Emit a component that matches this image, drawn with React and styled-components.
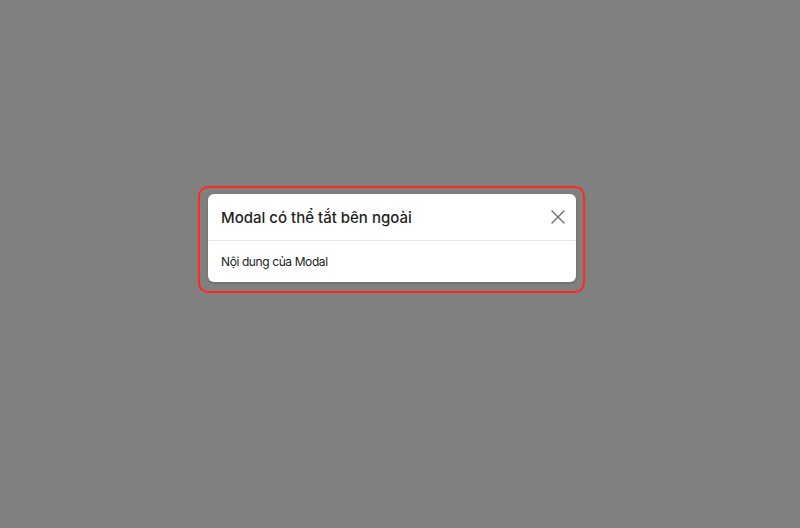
import React from "react";
import styled, { createGlobalStyle } from "styled-components";

const GlobalStyle = createGlobalStyle`
  html, body {
    margin: 0;
    padding: 0;
    height: 100%;
  }
  body {
    background: #808080;
    font-family: Inter, "Noto Sans", sans-serif;
  }
  #root {
    height: 100%;
  }
`;

const Page = styled.div`
  height: 528px;
  display: flex;
  justify-content: center;
  align-items: flex-start;
  padding: 186px 17px 0 0;
  box-sizing: border-box;
`;

const FocusRing = styled.div`
  padding: 6px 7px 9px 8px;
  border: 2px solid #ff2a1a;
  border-radius: 10px;
`;

const ModalBox = styled.div`
  width: 368px;
  background: #fff;
  border-radius: 6px;
  box-shadow: 0 1px 3px rgba(0, 0, 0, 0.2);
`;

const Header = styled.div`
  height: 46px;
  display: flex;
  align-items: center;
  justify-content: space-between;
  padding: 0 8px 0 13px;
  border-bottom: 1px solid #e4e4e4;
`;

const Title = styled.h2`
  margin: 0;
  font-size: 15px;
  font-weight: 500;
  color: #1f1f1f;
`;

const CloseButton = styled.button`
  border: none;
  background: none;
  padding: 0;
  width: 20px;
  height: 20px;
  display: flex;
  align-items: center;
  justify-content: center;
  cursor: pointer;
  color: #6b6b6b;
`;

const Body = styled.div`
  height: 41px;
  display: flex;
  align-items: center;
  padding: 0 13px;
  font-size: 12px;
  letter-spacing: -0.4px;
  color: #222;
`;

const App = () => {
  return (
    <>
      <GlobalStyle />
      <Page>
        <FocusRing>
          <ModalBox>
            <Header>
              <Title>Modal có thể tắt bên ngoài</Title>
              <CloseButton aria-label="Đóng">
                <svg width="14" height="14" viewBox="0 0 14 14" fill="none">
                  <path d="M1 1L13 13M13 1L1 13" stroke="currentColor" strokeWidth="1.3" strokeLinecap="round" />
                </svg>
              </CloseButton>
            </Header>
            <Body>Nội dung của Modal</Body>
          </ModalBox>
        </FocusRing>
      </Page>
    </>
  );
};

export default App;
